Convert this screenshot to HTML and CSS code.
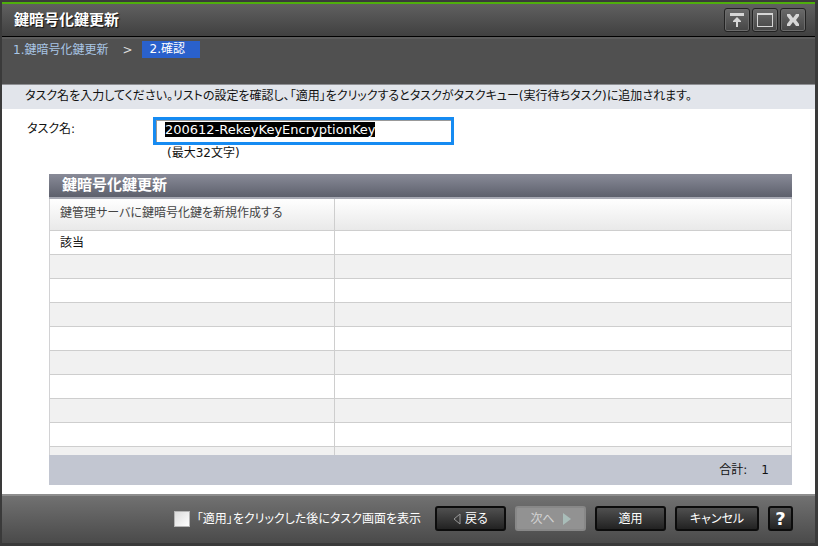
FILE: index.html
```html
<!DOCTYPE html>
<html lang="ja">
<head>
<meta charset="utf-8">
<meta name="viewport" content="width=device-width, initial-scale=1">
<title>鍵暗号化鍵更新</title>
<link rel="stylesheet" href="styles.css">
</head>
<body>
<div class="dialog">
  <header class="titlebar">
    <h1 class="title">鍵暗号化鍵更新</h1>
    <div class="window-tools">
      <button class="tool" type="button" aria-label="最小化">
        <svg viewBox="0 0 24 24" aria-hidden="true"><path d="M5 5h14v3H5z M12 9l4 4v1h-3v5h-2v-5H8v-1z"/></svg>
      </button>
      <button class="tool" type="button" aria-label="最大化">
        <svg viewBox="0 0 24 24" aria-hidden="true"><path fill-rule="evenodd" d="M4 5h16v14H4z M5 7v11h14V7z"/></svg>
      </button>
      <button class="tool" type="button" aria-label="閉じる">
        <svg viewBox="0 0 24 24" aria-hidden="true"><path d="M6 6h3l3 4 3-4h3v2l-3 4 3 4v2h-3l-3-4-3 4H6v-2l3-4-3-4z"/></svg>
      </button>
    </div>
  </header>
  <nav class="steps" aria-label="手順">
    <span>1.鍵暗号化鍵更新</span>
    <span class="separator">&gt;</span>
    <span class="current" aria-current="step">2.確認</span>
  </nav>
  <p class="guide">タスク名を入力してください。リストの設定を確認し、「適用」をクリックするとタスクがタスクキュー(実行待ちタスク)に追加されます。</p>
  <main class="content">
    <div class="field">
      <label for="task-name">タスク名:</label>
      <div class="field-body">
        <input class="task-name" id="task-name" type="text" maxlength="32" value="200612-RekeyKeyEncryptionKey" spellcheck="false" autocomplete="off">
        <span class="hint">(最大32文字)</span>
      </div>
    </div>
    <section class="panel">
      <h2 class="panel-title">鍵暗号化鍵更新</h2>
      <div class="panel-rows">
        <table class="grid">
          <thead><tr><th>鍵管理サーバに鍵暗号化鍵を新規作成する</th><th></th></tr></thead>
          <tbody>
            <tr><td>該当</td><td></td></tr>
            <tr><td></td><td></td></tr>
            <tr><td></td><td></td></tr>
            <tr><td></td><td></td></tr>
            <tr><td></td><td></td></tr>
            <tr><td></td><td></td></tr>
            <tr><td></td><td></td></tr>
            <tr><td></td><td></td></tr>
            <tr><td></td><td></td></tr>
            <tr><td></td><td></td></tr>
          </tbody>
        </table>
      </div>
      <div class="panel-total"><span>合計:</span><span>1</span></div>
    </section>
  </main>
  <footer class="actions">
    <label class="show-tasks"><input type="checkbox"><span>「適用」をクリックした後にタスク画面を表示</span></label>
    <button class="btn" type="button"><svg class="arrow" viewBox="0 0 8 12" aria-hidden="true"><path class="arrow-outline" d="M7 1v10L1 6z"/></svg>戻る</button>
    <button class="btn" type="button" disabled>次へ<svg class="arrow" viewBox="0 0 8 12" aria-hidden="true"><path class="arrow-solid" d="M0 0l8 6-8 6z"/></svg></button>
    <button class="btn" type="button">適用</button>
    <button class="btn btn-wide" type="button">キャンセル</button>
    <button class="btn btn-help" type="button" aria-label="ヘルプ">?</button>
  </footer>
</div>
<script src="script.js"></script>
</body>
</html>
```
FILE: styles.css
```css
* {
  box-sizing: border-box;
}

body {
  margin: 0;
  background: #303030;
  color: #111;
  font: 12px/18px "DejaVu Sans", "Noto Sans CJK JP", sans-serif;
  font-feature-settings: "palt";
}

h1, h2, p {
  margin: 0;
}

button, input {
  font: inherit;
  font-feature-settings: inherit;
}

.dialog {
  display: flex;
  flex-direction: column;
  height: 100vh;
  min-height: 400px;
  border: solid #3a3a3a;
  border-width: 2px 3px 3px 2px;
}

.titlebar {
  display: flex;
  align-items: center;
  justify-content: space-between;
  height: 35px;
  padding: 0 9px 0 12px;
  border-top: 2px solid #4fae0c;
  border-bottom: 1px solid #000;
  background: linear-gradient(#606060, #404040);
}

.title {
  color: #fff;
  font-size: 15px;
  line-height: 24px;
  text-shadow: 1px 1px 1px #111;
  font-feature-settings: normal;
}

.window-tools {
  display: flex;
  gap: 2px;
}

.tool {
  width: 26px;
  height: 24px;
  padding: 0;
  border: 1px solid #222;
  border-radius: 3px;
  background: linear-gradient(#6a6a6a, #454545);
  box-shadow: inset 0 0 0 1px #6b6b6b;
}

.tool svg {
  display: block;
  width: 24px;
  height: 24px;
  margin-top: -1px;
  fill: #d6d6d6;
}

.steps {
  display: flex;
  align-items: flex-start;
  gap: 14px;
  height: 47px;
  padding: 2px 11px;
  border-top: 2px solid #5c5c5c;
  background: #505050;
  color: #a9c6e6;
}

.separator {
  color: #ddd;
}

.current {
  padding: 0 15px 0 8px;
  margin-left: -5px;
  background: #2a61cc;
  color: #fff;
  line-height: 17px;
}

.guide {
  height: 25px;
  padding: 2px 23px;
  border-top: 1px solid #8f9094;
  background: #e2e5eb;
}

.content {
  display: flex;
  flex: 1;
  flex-direction: column;
  min-height: 0;
  padding: 8px 23px 9px 25px;
  background: #fff;
}

.field {
  display: flex;
  padding-bottom: 13px;
}

.field label {
  width: 126px;
  padding-top: 3px;
}

.field-body {
  display: flex;
  flex-direction: column;
  width: 301px;
}

.task-name {
  height: 28px;
  padding: 0 9px 3px;
  border: 3px solid #168bf2;
  background: #fff;
  box-shadow: inset 1px 1px 0 #999;
  outline: 0;
  font-size: 13px;
}

.task-name::selection {
  background: #000;
  color: #fff;
}

.hint {
  padding-left: 14px;
  line-height: 16px;
}

.panel {
  display: flex;
  flex: 1;
  flex-direction: column;
  min-height: 0;
  margin-left: 22px;
}

.panel-title {
  height: 25px;
  padding-left: 13px;
  border-bottom: 2px solid #a8aab4;
  background: linear-gradient(#898b98, #5d606c);
  color: #fff;
  font-size: 15px;
  line-height: 22px;
  font-feature-settings: normal;
}

.panel-rows {
  flex: 1;
  min-height: 0;
  overflow: hidden;
  border: solid #d2d2d4;
  border-width: 0 1px;
}

.grid {
  width: 100%;
  border-collapse: separate;
  border-spacing: 0;
  table-layout: fixed;
}

.grid th, .grid td {
  height: 24px;
  padding: 0 10px;
  border-bottom: 1px solid #cecece;
  font-weight: normal;
  text-align: left;
}

.grid th {
  height: 32px;
  padding-bottom: 3px;
  background: linear-gradient(#fff, #e9e9e9);
  color: #444;
}

.grid th:first-child {
  width: 285px;
}

.grid th:first-child, .grid td:first-child {
  border-right: 1px solid #cecece;
}

.grid tbody tr:nth-child(even) {
  background: #f1f1f1;
}

.panel-total {
  display: flex;
  align-items: center;
  justify-content: flex-end;
  gap: 14px;
  height: 30px;
  padding: 0 23px 0 10px;
  background: #c2c6d1;
}

.actions {
  display: flex;
  align-items: center;
  justify-content: flex-end;
  gap: 9px;
  height: 49px;
  padding: 0 22px 2px 12px;
  border-top: 2px solid #8e8e8e;
  background: linear-gradient(#717171, #4a4a4a);
  color: #fff;
}

.show-tasks {
  display: flex;
  align-items: center;
  gap: 7px;
  margin-right: 5px;
}

.show-tasks input {
  width: 16px;
  height: 16px;
  margin: 0;
  appearance: none;
  border: 1px solid #b5b5b5;
  background: linear-gradient(135deg, #dcdcdc, #fff);
}

.btn {
  display: flex;
  align-items: center;
  justify-content: center;
  gap: 4px;
  width: 71px;
  height: 25px;
  padding: 0;
  border: 2px solid #0c0c0c;
  border-radius: 3px;
  background: linear-gradient(#505050, #222);
  color: #fff;
}

.btn:disabled {
  gap: 8px;
  border-color: #888;
  background: #929292;
  color: #d2d2d2;
}

.btn-wide {
  width: 84px;
}

.btn-help {
  width: 25px;
  font-size: 18px;
  font-weight: bold;
}

.arrow {
  width: 8px;
  height: 12px;
}

.arrow-outline {
  fill: none;
  stroke: #999;
}

.arrow-solid {
  fill: #a9bdb9;
}
```
FILE: script.js
```js
const taskName = document.getElementById("task-name");
taskName.focus();
taskName.select();
```
